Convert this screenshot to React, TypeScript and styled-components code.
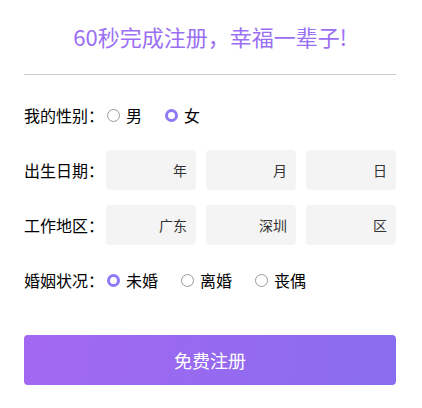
import React, { useState } from "react";
import styled, { createGlobalStyle } from "styled-components";

const Global = createGlobalStyle`
  html, body { margin: 0; padding: 0; background: #fff; }
  body { font-family: "Noto Sans CJK SC", "Noto Sans", sans-serif; }
  * { box-sizing: border-box; }
`;

const Page = styled.div`
  width: 422px;
  padding: 0 26px 0 24px;
`;

const Header = styled.div`
  height: 75px;
  display: flex;
  align-items: center;
  justify-content: center;
  border-bottom: 1px solid #cccccc;
  padding-bottom: 3px;
`;

const Title = styled.h1`
  margin: 0;
  font-size: 22px;
  font-weight: 400;
  color: #9a6ff4;
  line-height: 1;
`;

const Form = styled.div`
  padding-top: 20px;
  display: flex;
  flex-direction: column;
  gap: 15px;
`;

const Row = styled.div`
  height: 40px;
  display: flex;
  align-items: center;
`;

const Label = styled.span`
  width: 82px;
  flex: none;
  font-size: 16px;
  color: #000;
  white-space: nowrap;
`;

const Boxes = styled.div`
  flex: 1;
  display: grid;
  grid-template-columns: repeat(3, 1fr);
  gap: 10px;
  height: 40px;
`;

const Box = styled.div`
  background: #f4f4f4;
  border-radius: 4px;
  display: flex;
  align-items: center;
  justify-content: flex-end;
  padding-right: 9px;
  font-size: 14px;
  color: #333;
`;

const Options = styled.div`
  display: flex;
  align-items: center;
  gap: 22px;
`;

const Option = styled.label`
  display: flex;
  align-items: center;
  gap: 6px;
  font-size: 16px;
  color: #000;
  cursor: pointer;
`;

const Dot = styled.span<{ $on: boolean }>`
  width: 13px;
  height: 13px;
  border-radius: 50%;
  background: #fff;
  border: ${(p) => (p.$on ? "3px solid #8c7af6" : "1px solid #9a9a9a")};
  margin-left: 1px;
`;

const Submit = styled.button`
  margin-top: 20px;
  height: 50px;
  width: 100%;
  border: none;
  border-radius: 4px;
  background: linear-gradient(100deg, #a368f1 0%, #896cef 100%);
  color: #fff;
  font-size: 18px;
  font-family: inherit;
  cursor: pointer;
`;

function Radios({ items, initial }: { items: string[]; initial: string }) {
  const [v, setV] = useState(initial);
  return (
    <Options>
      {items.map((it) => (
        <Option key={it} onClick={() => setV(it)}>
          <Dot $on={v === it} />
          {it}
        </Option>
      ))}
    </Options>
  );
}

export default function App() {
  return (
    <>
      <Global />
      <Page>
        <Header>
          <Title>60秒完成注册，幸福一辈子!</Title>
        </Header>
        <Form>
          <Row>
            <Label>我的性别：</Label>
            <Radios items={["男", "女"]} initial="女" />
          </Row>
          <Row>
            <Label>出生日期：</Label>
            <Boxes>
              <Box>年</Box>
              <Box>月</Box>
              <Box>日</Box>
            </Boxes>
          </Row>
          <Row>
            <Label>工作地区：</Label>
            <Boxes>
              <Box>广东</Box>
              <Box>深圳</Box>
              <Box>区</Box>
            </Boxes>
          </Row>
          <Row>
            <Label>婚姻状况：</Label>
            <Radios items={["未婚", "离婚", "丧偶"]} initial="未婚" />
          </Row>
          <Submit>免费注册</Submit>
        </Form>
      </Page>
    </>
  );
}
